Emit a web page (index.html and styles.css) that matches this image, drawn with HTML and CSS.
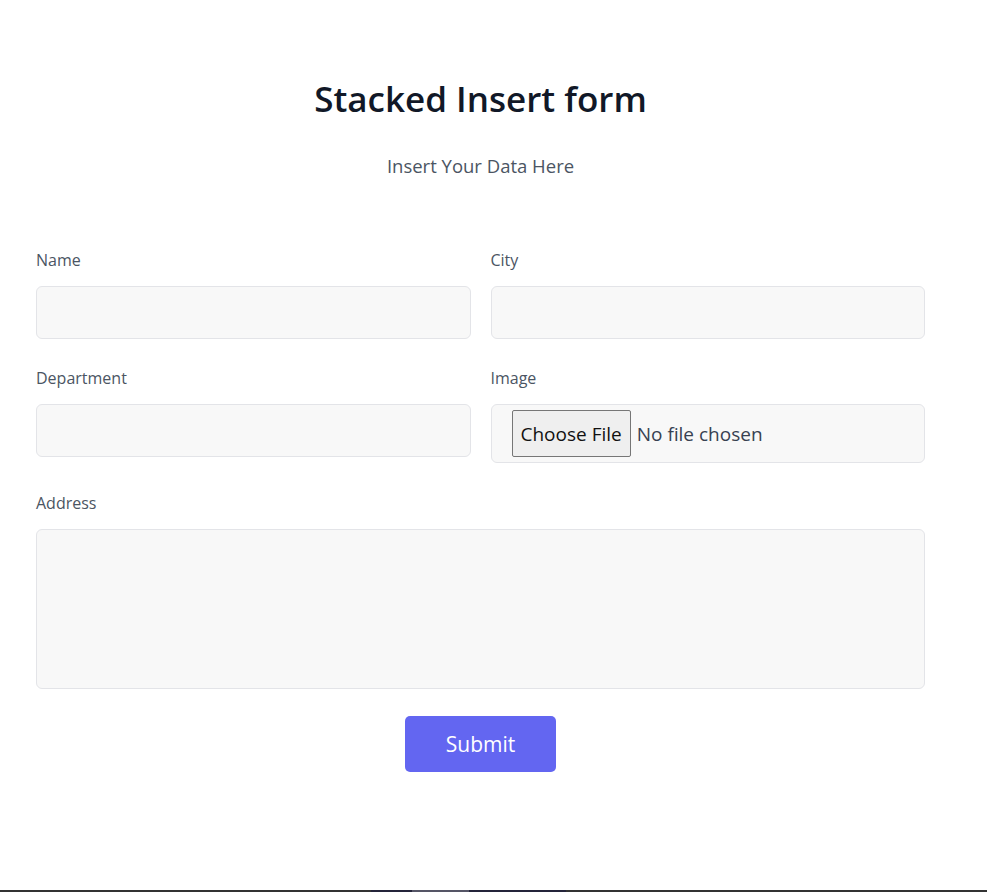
FILE: index.html
```html
<!DOCTYPE html>
<html lang="en">
<head>
<meta charset="utf-8">
<title>Stacked Insert form</title>
<link rel="stylesheet" href="styles.css">
</head>
<body>
<main class="page">
  <section class="card">
    <header class="intro">
      <h1 class="title">Stacked Insert form</h1>
      <p class="subtitle">Insert Your Data Here</p>
    </header>
    <form class="form">
      <div class="grid">
        <div class="field">
          <label class="label" for="name">Name</label>
          <input class="input" id="name" type="text">
        </div>
        <div class="field">
          <label class="label" for="city">City</label>
          <input class="input" id="city" type="text">
        </div>
        <div class="field">
          <label class="label" for="dept">Department</label>
          <input class="input" id="dept" type="text">
        </div>
        <div class="field">
          <label class="label" for="image">Image</label>
          <input class="input file" id="image" type="file">
        </div>
      </div>
      <div class="field full">
        <label class="label" for="address">Address</label>
        <textarea class="input textarea" id="address"></textarea>
      </div>
      <div class="actions">
        <button class="submit" type="button">Submit</button>
      </div>
    </form>
  </section>
</main>
<div class="taskbar"></div>
</body>
</html>
```
FILE: styles.css
```css
* { box-sizing: border-box; }
html, body { height: 100%; }
body {
  margin: 0;
  background: #ffffff;
  font-family: "Open Sans", "Noto Sans", sans-serif;
  display: flex;
  flex-direction: column;
  min-height: 100vh;
}
.page {
  flex: 1;
  padding-top: 78px;
}
.card {
  width: 889px;
  margin-left: 36px;
}
.intro { text-align: center; }
.title {
  margin: 0;
  font-size: 35px;
  line-height: 42px;
  font-weight: 600;
  color: #111827;
}
.subtitle {
  margin: 32px 0 0;
  font-size: 18.5px;
  line-height: 28px;
  color: #4b5563;
}
.form { margin-top: 68px; }
.grid {
  display: grid;
  grid-template-columns: 1fr 1fr;
  column-gap: 20px;
  row-gap: 27px;
  align-items: start;
}
.field { display: flex; flex-direction: column; }
.full { margin-top: 28px; }
.label {
  font-size: 16px;
  line-height: 24px;
  color: #4b5563;
  margin-bottom: 14px;
}
.input {
  display: block;
  width: 100%;
  height: 53px;
  background: #f8f8f8;
  border: 1px solid #e3e4e8;
  border-radius: 6px;
  padding: 0 20px;
  font-family: inherit;
  font-size: 16px;
  color: #374151;
  outline: none;
}
.file {
  height: 59px;
  padding: 5px 20px;
  font-size: 19px;
  color: #374151;
}
.file::file-selector-button {
  height: 47px;
  margin-right: 6px;
  padding: 0 8px;
  border: 1px solid #767676;
  border-radius: 2px;
  background: #efefef;
  color: #111111;
  font-family: inherit;
  font-size: 19px;
}
.textarea {
  height: 160px;
  resize: none;
  padding: 12px 20px;
}
.actions {
  display: flex;
  justify-content: center;
  margin-top: 27px;
}
.submit {
  width: 151px;
  height: 56px;
  border: none;
  border-radius: 5px;
  background: #6366f1;
  color: #ffffff;
  font-family: inherit;
  font-size: 21px;
  cursor: pointer;
}
.taskbar {
  height: 2px;
  background: linear-gradient(to right, #333333 0, #333333 371px, #24243a 371px, #24243a 412px, #555566 412px, #555566 469px, #24243a 469px, #24243a 566px, #333333 566px);
}
```
